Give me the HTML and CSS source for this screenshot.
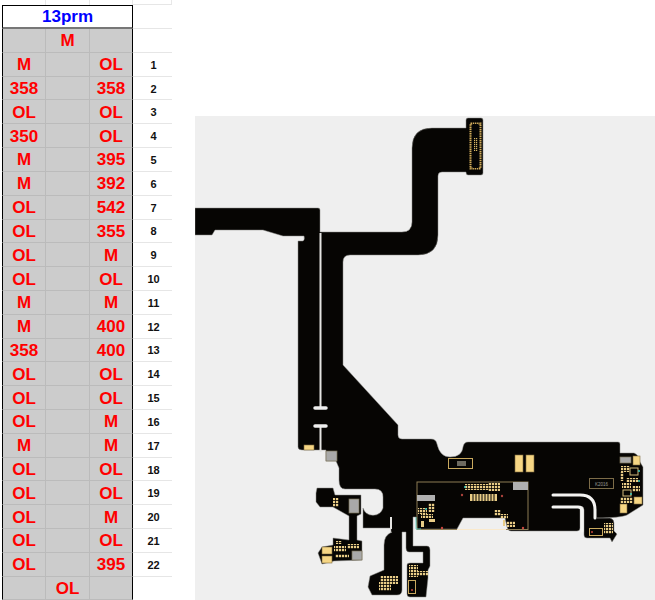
FILE: index.html
```html
<!DOCTYPE html>
<html lang="en">
<head>
  <meta charset="UTF-8">
  <title>13prm</title>
  <link rel="stylesheet" href="styles.css">
</head>
<body>
  <div class="page">
    <!-- Readings sheet -->
    <div class="sheet">
      <div class="top"></div><div class="top"></div><div class="top"></div><div class="top num"></div>
      <div class="title">13prm</div><div class="num"></div>

      <div class="cell first"></div><div class="cell">M</div><div class="cell last"></div><div class="num"></div>
      <div class="cell first">M</div><div class="cell"></div><div class="cell last">OL</div><div class="num">1</div>
      <div class="cell first">358</div><div class="cell"></div><div class="cell last">358</div><div class="num">2</div>
      <div class="cell first">OL</div><div class="cell"></div><div class="cell last">OL</div><div class="num">3</div>
      <div class="cell first">350</div><div class="cell"></div><div class="cell last">OL</div><div class="num">4</div>
      <div class="cell first">M</div><div class="cell"></div><div class="cell last">395</div><div class="num">5</div>
      <div class="cell first">M</div><div class="cell"></div><div class="cell last">392</div><div class="num">6</div>
      <div class="cell first">OL</div><div class="cell"></div><div class="cell last">542</div><div class="num">7</div>
      <div class="cell first">OL</div><div class="cell"></div><div class="cell last">355</div><div class="num">8</div>
      <div class="cell first">OL</div><div class="cell"></div><div class="cell last">M</div><div class="num">9</div>
      <div class="cell first">OL</div><div class="cell"></div><div class="cell last">OL</div><div class="num">10</div>
      <div class="cell first">M</div><div class="cell"></div><div class="cell last">M</div><div class="num">11</div>
      <div class="cell first">M</div><div class="cell"></div><div class="cell last">400</div><div class="num">12</div>
      <div class="cell first">358</div><div class="cell"></div><div class="cell last">400</div><div class="num">13</div>
      <div class="cell first">OL</div><div class="cell"></div><div class="cell last">OL</div><div class="num">14</div>
      <div class="cell first">OL</div><div class="cell"></div><div class="cell last">OL</div><div class="num">15</div>
      <div class="cell first">OL</div><div class="cell"></div><div class="cell last">M</div><div class="num">16</div>
      <div class="cell first">M</div><div class="cell"></div><div class="cell last">M</div><div class="num">17</div>
      <div class="cell first">OL</div><div class="cell"></div><div class="cell last">OL</div><div class="num">18</div>
      <div class="cell first">OL</div><div class="cell"></div><div class="cell last">OL</div><div class="num">19</div>
      <div class="cell first">OL</div><div class="cell"></div><div class="cell last">M</div><div class="num">20</div>
      <div class="cell first">OL</div><div class="cell"></div><div class="cell last">OL</div><div class="num">21</div>
      <div class="cell first">OL</div><div class="cell"></div><div class="cell last">395</div><div class="num">22</div>
      <div class="cell first"></div><div class="cell">OL</div><div class="cell last"></div><div class="num blank"></div>
    </div>

    <!-- Flex cable board view, drawn in page coordinates -->
    <div class="board">
      <svg class="board-art" viewBox="195 116 460 484" width="460" height="484">
        <defs>
          <pattern id="padGrid" width="3" height="3" patternUnits="userSpaceOnUse">
            <rect width="2.2" height="2.2" fill="#e9cd87"/>
          </pattern>
          <pattern id="pinRow" width="2" height="2" patternUnits="userSpaceOnUse">
            <rect width="1.2" height="1.2" fill="#d9b866"/>
          </pattern>
        </defs>

        <path class="flex" d="M195 208 H318 Q320 208 320 210 V232 H402 Q412 232 412 222 V148 Q412 128 432 128 H466 V120 Q466 118 468 118 H481 Q483 118 483 120 V173 Q483 175 481 175 H468 Q466 175 466 172 H442 Q438 172 438 176 V235 Q438 255 418 255 H350 Q343 255 343 262 V365 L398 425 V435 Q398 439 402 439 H431 Q436 439 437 444 Q440 457 450 457 Q462 457 463 447 Q464 442 468 442 H618 Q620 442 620 444 V453 H634 Q639 455 640 462 L643 467 V505 L627 515 Q620 518 597 518 H610 Q614 519 614 523 V531 L617 534 L612 542 L610 538 H587 Q584 538 584 535 V510 Q584 506 580 506 V528 Q580 531 577 531 H511 Q508 531 507 527 L505 518 H463 L457 529 H417 L416 517 H413 V546 H427 Q430 546 430 550 V566 L428 570 V578 L426 597 H410 Q407 597 407 594 V565 Q407 563 410 563 H423 V552 H409 Q406 552 406 548 V532 H402 V590 Q402 595 397 595 H372 L368 587 L370 576 L384 570 V545 Q384 535 392 532 H391 V528 H363 V508 A10.5 10.5 0 0 0 383 508 V497 Q383 489 375 489 H345 Q339 489 339 480 V468 L336 461 H326 V450 H302 Q298 450 298 447 V241 H303 Q305 240 304 236 H283 L263 230 H215 L212 235 H195 Z"/>
        <path class="flex" d="M317 488 H333 L335 495 H361 V514 L357 516 V540 L362 541 V560 L334 561 L322 564 L318 553 L322 547 L333 545 V538 L349 540 V516 L333 507 H320 L316 502 V493 Z"/>

        <!-- cuts through the flex -->
        <path class="slit" d="M320.5 233 V408"/>
        <path class="slit" d="M320.5 426 V452"/>
        <path class="slit-bar" d="M315 408 H326"/>
        <path class="slit-bar" d="M315 426 H326"/>
        <path class="slit-wide" d="M553 495 H580 Q595 495 595 510 V518"/>
        <path class="slit-wide" d="M553 507 H578 Q582 507 582 511 V531"/>
        <path class="slit" d="M391 517 V529"/>

        <!-- top connector -->
        <rect class="conn" x="470.500" y="123.500" width="10" height="45"/>
        <rect x="473" y="124" width="5" height="44" fill="#050505"/>
        <rect x="474" y="138" width="4" height="13" fill="url(#pinRow)"/>

        <!-- grey shields and gold pads -->
        <rect class="shield" x="326" y="451" width="11" height="10"/>
        <rect class="gold" x="304" y="445" width="10" height="5"/>
        <rect class="gold" x="515" y="455" width="8" height="17"/>
        <rect class="gold" x="526" y="455" width="8" height="17"/>
        <rect class="shield" x="349" y="499" width="10" height="14"/>
        <rect class="shield" x="352" y="551" width="10" height="9"/>
        <rect class="gold" x="322" y="547" width="10" height="7"/>
        <rect class="gold" x="322" y="556" width="10" height="7"/>
        <rect class="shield" x="620" y="457" width="11" height="6"/>
        <rect class="gold" x="633" y="456" width="7" height="9"/>
        <rect class="gold" x="634" y="497" width="8" height="7"/>
        <rect class="gold" x="620" y="504" width="7" height="9"/>

        <!-- chips -->
        <rect class="chip" x="448.500" y="458.500" width="24" height="10"/>
        <rect x="457" y="461" width="9" height="5" fill="#6d6a60"/>
        <rect class="chip-label" x="589.500" y="478.500" width="24" height="10"/>
        <text class="chip-text" x="601.500" y="485.500">K2016</text>

        <!-- logic panel -->
        <rect class="panel" x="417" y="482" width="111" height="47.500"/>
        <path class="cyan" d="M416 517 V529 H421"/>
        <path class="cream" d="M457 529.500 H506"/>
        <rect class="shield-flat" x="417" y="495" width="18" height="6"/>
        <rect class="shield-flat" x="513" y="482" width="15" height="8"/>
        <rect x="470" y="494" width="27" height="7" fill="#e9cd87"/>
        <path d="M473 494 V501 M476 494 V501 M479 494 V501 M482 494 V501 M485 494 V501 M488 494 V501 M491 494 V501 M494 494 V501" stroke="#050505"/>
        <rect x="465" y="484" width="12" height="6" fill="url(#padGrid)"/>
        <rect x="475" y="484" width="14" height="6" fill="url(#padGrid)"/>
        <rect x="488" y="483" width="12" height="8" fill="url(#padGrid)"/>
        <rect x="428" y="503" width="7" height="9" fill="url(#padGrid)"/>
        <rect x="418" y="508" width="9" height="6" fill="url(#padGrid)"/>
        <rect x="421" y="514" width="12" height="4" fill="url(#padGrid)"/>
        <rect x="421" y="521" width="3" height="6" fill="#e9cd87"/>
        <rect x="429" y="519" width="6" height="3" fill="#e9cd87"/>
        <rect x="494" y="510" width="7" height="6" fill="url(#padGrid)"/>
        <rect x="500" y="514" width="8" height="5" fill="url(#padGrid)"/>
        <rect x="506" y="521" width="9" height="6" fill="url(#padGrid)"/>
        <rect x="503" y="520" width="2" height="6" fill="#e9cd87"/>
        <circle cx="462" cy="495" r="1.200" fill="#a8423c"/>
        <circle cx="502" cy="496" r="1.200" fill="#a8423c"/>
        <circle cx="442" cy="528" r="1.200" fill="#c8443c"/>
        <circle cx="523" cy="528" r="1.200" fill="#c8443c"/>
        <circle cx="426" cy="509" r="1" fill="#3fd0c0"/>
        <circle cx="465" cy="487" r="1" fill="#3fd0c0"/>

        <!-- right cluster -->
        <rect x="621" y="466" width="9" height="6" fill="url(#padGrid)"/>
        <rect x="620" y="472" width="4" height="9" fill="url(#padGrid)"/>
        <rect x="630" y="468" width="8" height="7" class="outline"/>
        <rect x="626" y="478" width="12" height="4" fill="url(#padGrid)"/>
        <rect x="622" y="483" width="9" height="5" fill="url(#padGrid)"/>
        <rect x="632" y="486" width="8" height="6" fill="url(#padGrid)"/>
        <rect x="623" y="490" width="8" height="6" class="outline"/>
        <rect x="620" y="497" width="13" height="6" fill="url(#padGrid)"/>
        <circle cx="639" cy="471" r="1" fill="#3fd0c0"/>
        <circle cx="639" cy="481" r="1" fill="#3fd0c0"/>
        <circle cx="631" cy="494" r="1" fill="#3fd0c0"/>

        <!-- lower right tail -->
        <rect class="chip" x="589.500" y="528.500" width="13" height="7"/>
        <rect x="604" y="523" width="9" height="11" fill="url(#padGrid)"/>
        <circle cx="592" cy="532" r="1" fill="#c8443c"/>

        <!-- sensor islands -->
        <rect x="333" y="498" width="6" height="9" fill="url(#padGrid)"/>
        <rect x="336" y="541" width="6" height="3" fill="url(#padGrid)"/>
        <rect x="334" y="546" width="12" height="6" fill="url(#padGrid)"/>
        <rect x="335" y="554" width="14" height="4" fill="url(#padGrid)"/>
        <rect x="347" y="544" width="12" height="5" fill="url(#padGrid)"/>
        <rect x="380" y="576" width="18" height="8" fill="url(#padGrid)"/>
        <rect x="379" y="582" width="12" height="9" fill="url(#padGrid)"/>
        <rect x="409" y="565" width="9" height="12" fill="url(#padGrid)"/>
        <rect x="417" y="571" width="11" height="5" fill="url(#padGrid)"/>
        <rect class="chip" x="408.500" y="580.500" width="7" height="13"/>
        <circle cx="412" cy="590" r="1" fill="#c8443c"/>
      </svg>
    </div>
  </div>
</body>
</html>
```

FILE: styles.css
```css
body {
  margin: 0;
  background: #fff;
  font-family: "Liberation Sans", Arial, sans-serif;
}

.page {
  display: flex;
  gap: 23px;
  width: 655px;
  height: 600px;
  overflow: hidden;
}

/* Sheet */
.sheet {
  display: grid;
  grid-template-columns: 44px 44px 43px 39px;
  grid-template-rows: 5px 24px repeat(23, 23.82px);
  flex: none;
  align-self: flex-start;
  width: 170px;
  margin-left: 2px;
}

.top {
  border-right: 1px solid #e8e8e8;
}

.title {
  grid-column: 1 / span 3;
  display: flex;
  align-items: center;
  justify-content: center;
  padding-top: 1px;
  background: #fff;
  border: 1px solid #000;
  border-bottom: 2px solid #777;
  color: #0000ff;
  font-size: 17px;
  font-weight: bold;
}

.cell {
  display: flex;
  align-items: center;
  justify-content: center;
  padding-top: 2px;
  background: #cccccc;
  border-right: 1px solid #bbb;
  border-bottom: 1px solid #bbb;
  color: #ff0000;
  font-size: 17px;
  font-weight: bold;
}

.cell.first {
  border-left: 1px solid #000;
}

.cell.last {
  border-right: 1px solid #000;
}

.num {
  display: flex;
  align-items: center;
  justify-content: center;
  padding: 1px 0 0 2px;
  border-bottom: 1px solid #e6e6e6;
  color: #111;
  font-size: 11px;
  font-weight: bold;
}

.num.blank {
  border-bottom: none;
}

/* Board */
.board {
  flex: none;
  width: 460px;
  height: 484px;
  margin-top: 116px;
  background: #efefef;
}

.board-art {
  display: block;
}

.flex {
  fill: #060503;
  stroke: #8a8a86;
  stroke-width: 0.5;
}

.slit {
  fill: none;
  stroke: #e4e4e2;
  stroke-width: 2;
}

.slit-bar {
  fill: none;
  stroke: #efefef;
  stroke-width: 3.5;
  stroke-linecap: round;
}

.slit-wide {
  fill: none;
  stroke: #f4f4f2;
  stroke-width: 3;
  stroke-linecap: round;
}

.conn {
  fill: #050505;
  stroke: #d4ae5c;
  stroke-width: 2;
  stroke-dasharray: 1.500 0.700;
}

.shield {
  fill: #a9a9a9;
  stroke: #7a6f55;
  stroke-width: 0.7;
}

.shield-flat {
  fill: #b0b0b0;
}

.gold {
  fill: #f6d684;
  stroke: #7d6a3d;
  stroke-width: 0.6;
}

.chip {
  fill: #060503;
  stroke: #c9a95e;
  stroke-width: 1;
}

.chip-label {
  fill: #060503;
  stroke: #7c6c48;
  stroke-width: 1;
}

.chip-text {
  fill: #9a9a94;
  font-size: 4.500px;
  text-anchor: middle;
}

.panel {
  fill: none;
  stroke: #8b7c55;
  stroke-width: 1;
}

.cyan {
  fill: none;
  stroke: #58d8cc;
  stroke-width: 0.8;
}

.cream {
  fill: none;
  stroke: #fae9cb;
  stroke-width: 1;
}

.outline {
  fill: none;
  stroke: #d4bb7c;
  stroke-width: 1;
}
```
